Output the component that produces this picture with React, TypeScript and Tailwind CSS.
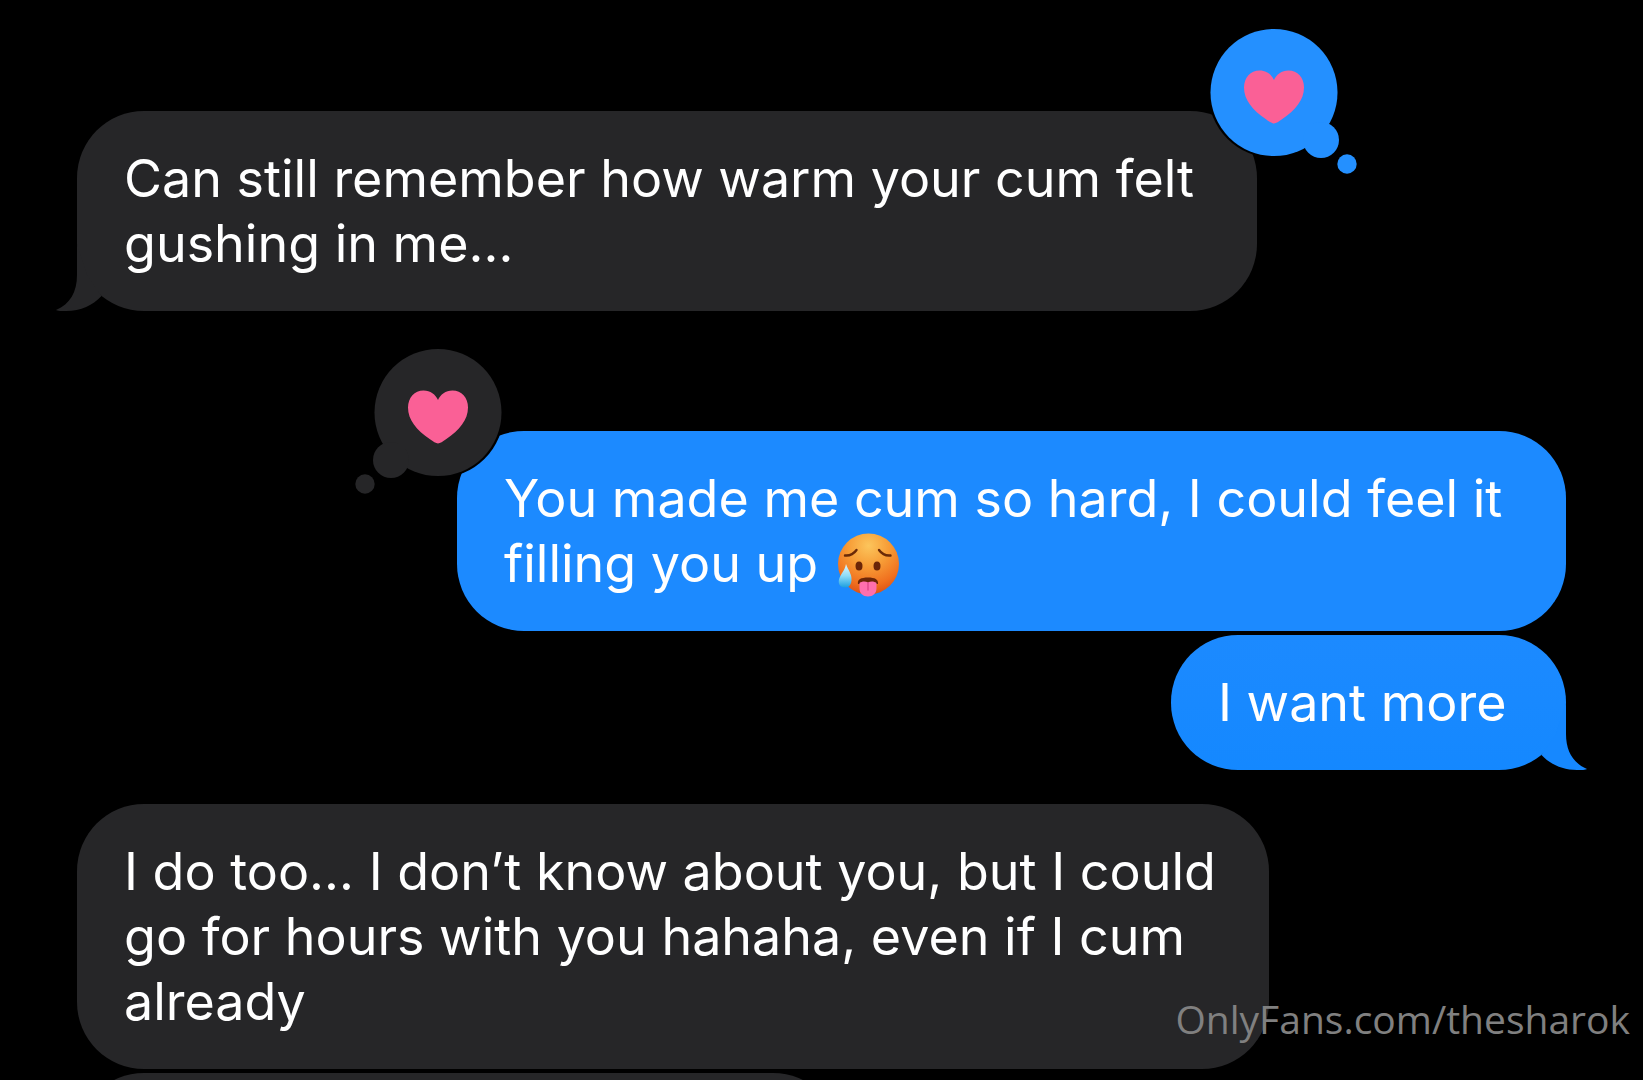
import { type FC, type ReactNode } from "react";
import clsx from "clsx";

type Side = "in" | "out";

interface IBubbleProps {
  side: Side;
  className?: string;
  tail?: boolean;
  loved?: boolean;
  children?: ReactNode;
}

const Tail: FC<{ side: Side }> = ({ side }) => (
  <svg
    aria-hidden="true"
    viewBox="0 0 70 70"
    className={clsx(
      "absolute bottom-0 size-[70px]",
      side === "out"
        ? "-right-[22px] text-[#1688ff]"
        : "-left-[22px] -scale-x-100 text-[#262628]",
    )}
  >
    <path
      fill="currentColor"
      d="M48 3V34C48 51 55 63 69 69C68 70 63 70 59 70C44 70 32 64 23.500 55L38 34Z"
    />
  </svg>
);

// thought bubble with the heart, the black ring separates it from the message
const Reaction: FC<{ side: Side }> = ({ side }) => (
  <svg
    role="img"
    aria-label="Loved"
    viewBox="0 0 150 150"
    className={clsx(
      "absolute -top-[85px] size-[150px]",
      side === "in"
        ? "-right-[101px] text-[#2490ff]"
        : "-left-[103px] -scale-x-100 text-[#262628]",
    )}
  >
    <circle cx="66" cy="66" r="66" fill="#000" />
    <g fill="currentColor">
      <circle cx="66" cy="66.500" r="63.500" />
      <circle cx="113" cy="114" r="18" />
      <circle cx="139" cy="138" r="9.700" />
    </g>
    <path
      fill="#fa6096"
      d="M66 97.500C64 97.500 61 95.500 58 93.300C44.500 84 36 74 36 61.500C36 51.500 42.500 44.500 51.500 44.500C58.500 44.500 63.500 48.500 66 54C68.500 48.500 73.500 44.500 80.500 44.500C89.500 44.500 96 51.500 96 61.500C96 74 87.500 84 74 93.300C71 95.500 68 97.500 66 97.500Z"
    />
  </svg>
);

const HotFace: FC = () => (
  <svg
    role="img"
    aria-label="Hot face"
    viewBox="0 0 62 64"
    className="ml-1 -my-3 inline-block h-[64px] w-[62px] align-[-3px]"
  >
    <defs>
      <radialGradient id="face" cx="0.5" cy="0.2" r="0.85">
        <stop offset="0" stopColor="#fcc55c" />
        <stop offset="0.4" stopColor="#f79c36" />
        <stop offset="0.75" stopColor="#f0701f" />
        <stop offset="1" stopColor="#d84a14" />
      </radialGradient>
      <linearGradient id="drop" x1="0" y1="0" x2="0" y2="1">
        <stop offset="0" stopColor="#e2f8ff" />
        <stop offset="0.5" stopColor="#8fdcf8" />
        <stop offset="1" stopColor="#1b9fe0" />
      </linearGradient>
    </defs>
    <circle cx="31.500" cy="31" r="30.500" fill="url(#face)" />
    <g fill="none" stroke="#6b2a08" strokeWidth="2.400" strokeLinecap="round">
      <path d="M8 22.500C13 23 17 20.500 19.500 17" />
      <path d="M42 17C44.500 20.500 48.500 23 53.500 22.500" />
    </g>
    <g fill="#6b2508">
      <ellipse cx="22" cy="33" rx="3.500" ry="4.500" />
      <ellipse cx="40" cy="33" rx="3.500" ry="4.500" />
      <path d="M21 51C20 46.500 24 44.500 31 44.500S41.500 46.500 41 51Z" />
    </g>
    <path
      fill="#ff6fae"
      d="M22.500 50C25 48 28.500 48 31 49.500C33.500 48 37 48 39.500 50V55C39.500 60.500 36 63.500 31 63.500S22.500 60.500 22.500 55Z"
    />
    <path
      d="M31 50V57"
      stroke="#e04a8c"
      strokeWidth="1.500"
      strokeLinecap="round"
    />
    <path
      fill="url(#drop)"
      d="M9 31C11 37 15 41 14.500 47C14.300 52 11.500 55 7.500 54.500C3 54 1 51 2 46.500C3.200 41.500 8 37.500 9 31Z"
    />
  </svg>
);

const Bubble: FC<IBubbleProps> = ({
  side,
  className,
  tail,
  loved,
  children,
}) => (
  <li
    className={clsx(
      "relative min-h-[135px] rounded-[67px] py-[35px] pl-[47px] text-[52px] leading-[65px] text-white",
      side === "in" ? "self-start bg-[#262628]" : "self-end bg-[#1c8aff]",
      side === "out" && tail && "bg-linear-to-b from-[#1c8aff] to-[#1488ff]",
      className,
    )}
  >
    {tail && <Tail side={side} />}
    {loved && <Reaction side={side} />}
    <p className="relative">{children}</p>
  </li>
);

const App: FC = () => {
  return (
    <main className="relative h-screen overflow-hidden bg-black font-['Inter',sans-serif]">
      <ul className="flex flex-col px-[77px] pt-[111px]">
        <Bubble
          side="in"
          className="w-full max-w-[1180px] pr-[40px]"
          tail
          loved
        >
          Can still remember how warm your cum felt gushing in me…
        </Bubble>

        <Bubble
          side="out"
          className="mt-[120px] w-full max-w-[1109px] pr-[40px]"
          loved
        >
          You made me cum so hard, I could feel it filling you up <HotFace />
        </Bubble>
        <Bubble side="out" className="mt-1 w-full max-w-[395px]" tail>
          I want more
        </Bubble>

        <Bubble side="in" className="mt-[34px] w-full max-w-[1192px] pr-[40px]">
          I do too… I don’t know about you, but I could go for hours with you
          hahaha, even if I cum already
        </Bubble>
        <Bubble side="in" className="mt-1 w-full max-w-[763px]" />
      </ul>

      <a
        href="#"
        className="absolute right-[13px] bottom-[34px] font-['Open_Sans',sans-serif] text-[39px] leading-[54px] text-[#808080]"
      >
        OnlyFans.com/thesharok
      </a>
    </main>
  );
};

export default App;
